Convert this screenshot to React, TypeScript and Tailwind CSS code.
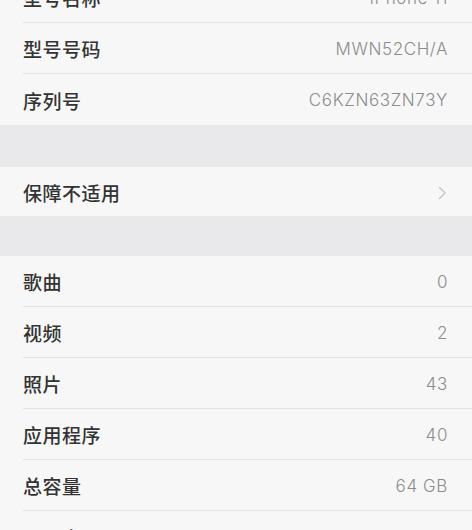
import React from "react";

const cn = '"Noto Sans CJK SC", "Noto Sans", sans-serif';
const lat = 'Inter, "Liberation Sans", sans-serif';

function Row({ label, value, chevron, last, h = "h-[51px]" }: { label: string; value?: string; chevron?: boolean; last?: boolean; h?: string }) {
  return (
    <div className={`flex ${h} pl-[23px]`}>
      <div className={`flex flex-1 items-center justify-between pr-[24px] pt-[3px] ${last ? "" : "border-b border-[#e2e2e4]"}`}>
        <span className="text-[19px] text-[#333333] font-medium tracking-[0.5px]" style={{ fontFamily: cn }}>{label}</span>
        {chevron ? (
          <svg width="9" height="14" viewBox="0 0 9 14" className="mr-[1px]">
            <path d="M1.5 1.5 L7 7 L1.5 12.5" fill="none" stroke="#c4c4c8" strokeWidth="1.4" strokeLinecap="round" strokeLinejoin="round" />
          </svg>
        ) : (
          <span className="text-[17px] text-[#8c8c8e] tracking-[0.6px] font-light" style={{ fontFamily: lat }}>{value}</span>
        )}
      </div>
    </div>
  );
}

export default function App() {
  return (
    <div className="w-[472px] h-[530px] overflow-hidden bg-[#e9e9eb]">
      <div className="-mt-[28px]">
        <div className="bg-[#f7f7f7]">
          <Row label="型号名称" value="iPhone 11" />
          <Row label="型号号码" value="MWN52CH/A" />
          <Row label="序列号" value="C6KZN63ZN73Y" last />
        </div>
        <div className="h-[42px]" />
        <div className="bg-[#f7f7f7]">
          <Row label="保障不适用" chevron last h="h-[49px]" />
        </div>
        <div className="h-[40px]" />
        <div className="bg-[#f7f7f7]">
          <Row label="歌曲" value="0" />
          <Row label="视频" value="2" />
          <Row label="照片" value="43" />
          <Row label="应用程序" value="40" />
          <Row label="总容量" value="64 GB" />
          <Row label="可用容量" value="49.5 GB" last />
        </div>
      </div>
    </div>
  );
}
